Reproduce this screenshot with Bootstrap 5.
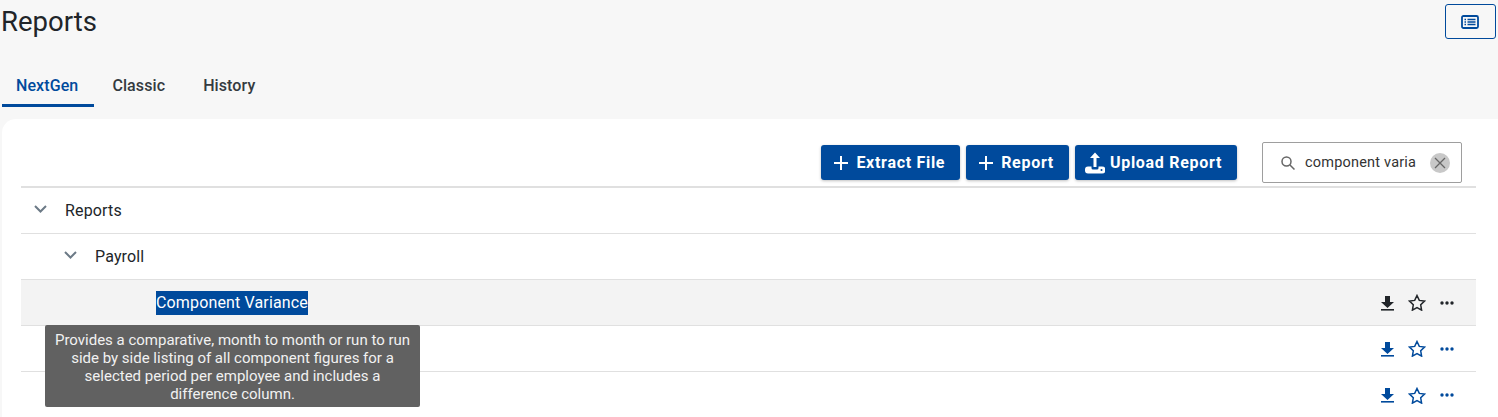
<!DOCTYPE html>
<html lang="en">
<head>
  <meta charset="UTF-8">
  <meta name="viewport" content="width=device-width, initial-scale=1">
  <title>Reports</title>
  <link href="https://cdn.jsdelivr.net/npm/bootstrap@5.3.3/dist/css/bootstrap.min.css" rel="stylesheet">
  <style>
    html, body { height: 417px; overflow: hidden; }
    body { background: #f7f7f7; font-family: Roboto, "Liberation Sans", sans-serif; color: #212529; font-size: 15px; }
    .page-title { font-size: 27.500px; line-height: 32px; font-weight: 400; margin: 0; padding: 6px 0 0 1px; height: 45px; }
    .view-btn { width: 51px; height: 35px; margin: 4px 2px 0 0; border: 1px solid #004a9c; border-radius: 3px; background: transparent; padding: 0 2px 0 0; color: #004a9c; }
    .tab-row { padding: 0 0 0 2px; height: 62px; align-items: flex-end; }
    .tab-item { font-size: 16px; font-weight: 500; letter-spacing: .1px; color: #343a40; height: 46px; line-height: 20px; padding: 15px 14px 0; border-bottom: 3px solid transparent; text-decoration: none; margin-right: 10px; }
    .tab-item.is-on { color: #004a9c; border-bottom-color: #004a9c; margin-right: 4px; padding-right: 16px; }
    .tab-spacer { height: 12px; }
    .sheet { background: #fff; border-radius: 14px 0 0 0; margin-left: 2px; padding: 23px 22px 0 19px; height: 300px; position: relative; }
    .tool-row { height: 46px; border-bottom: 2px solid #e0e0e0; align-items: flex-start; padding-top: 3px; }
    .tool-btns { gap: 6px; }
    .act-btn { height: 35px; background: #004a9c; color: #fff; border: 0; border-radius: 3px; font-size: 16px; font-weight: 700; letter-spacing: .7px; padding: 0 15px 0 13px; box-shadow: 0 1px 3px rgba(0,0,0,.25); white-space: nowrap; display: flex; align-items: center; gap: 8px; }
    .act-btn.has-upload { padding-left: 10px; gap: 5px; }
    .search-box { width: 200px; height: 41px; margin: -3px 14px 0 25px; border: 1px solid #9e9e9e; border-radius: 2px; padding: 0 10px 0 17px; font-size: 14.500px; letter-spacing: .2px; color: #333; }
    .search-txt { width: 113px; margin-left: 9px; white-space: nowrap; }
    .clear-dot { width: 20px; height: 20px; border-radius: 50%; background: #c8c8c8; margin-left: 12px; flex: none; }
    .tree-row { height: 46px; border-bottom: 1px solid #e0e0e0; font-size: 16px; letter-spacing: .15px; }
    .tree-row.is-hover { background: #f3f3f3; }
    .lvl-one { padding-left: 13px; }
    .lvl-two { padding-left: 43px; }
    .lvl-three { padding-left: 135px; }
    .caret-ico { margin: 0 18px 3px 0; }
    .sel-txt { background: #004a9c; color: #fff; }
    .row-icons { gap: 13px; padding-right: 22px; color: #004a9c; }
    .row-icons svg:last-child { margin-left: 1px; }
    .is-hover .row-icons { color: #212529; }
    .hint-box { position: absolute; left: 43px; top: 206px; width: 375px; height: 82px; background: #616161; color: #f1f1f1; border-radius: 2px; font-size: 15px; line-height: 18px; text-align: center; padding: 6px 8px; z-index: 5; letter-spacing: 0; }
  </style>
</head>
<body>

  <div class="d-flex justify-content-between">
    <h1 class="page-title">Reports</h1>
    <button class="view-btn" type="button" aria-label="Toggle view">
      <svg width="18" height="14" viewBox="0 0 18 14" fill="none" stroke="currentColor"><rect x="1" y="1" width="16" height="12" rx="1.500" stroke-width="1.800"/><path d="M3.500 4.500h1.500M6.500 4.500h8M3.500 7h1.500M6.500 7h8M3.500 9.500h1.500M6.500 9.500h8" stroke-width="1.400"/></svg>
    </button>
  </div>

  <div class="d-flex tab-row">
    <a class="tab-item is-on" href="#">NextGen</a>
    <a class="tab-item" href="#">Classic</a>
    <a class="tab-item" href="#">History</a>
  </div>
  <div class="tab-spacer"></div>

  <div class="sheet">
    <div class="d-flex justify-content-end tool-row">
      <div class="d-flex tool-btns">
        <button class="act-btn" type="button"><svg width="14" height="14" viewBox="0 0 14 14" stroke="currentColor" stroke-width="2"><path d="M7 0v14M0 7h14"/></svg> Extract File</button>
        <button class="act-btn" type="button"><svg width="14" height="14" viewBox="0 0 14 14" stroke="currentColor" stroke-width="2"><path d="M7 0v14M0 7h14"/></svg> Report</button>
        <button class="act-btn has-upload" type="button"><svg width="20" height="22" viewBox="0 0 20 22" fill="currentColor"><path d="M8.500 15V6H5l5-5.500L15 6h-3.500v9z"/><path d="M0 17.500a3 3 0 0 1 3-3h3.500v1.500a1.500 1.500 0 0 0 1.500 1.500h4a1.500 1.500 0 0 0 1.500-1.500v-1.500H17a3 3 0 0 1 0 7H3a3 3 0 0 1-3-3z"/><circle cx="16.500" cy="18" r="1" fill="#004a9c"/></svg> Upload Report</button>
      </div>
      <div class="d-flex align-items-center search-box">
        <svg width="16" height="16" viewBox="0 0 16 16" fill="none" stroke="#666" stroke-width="1.500"><circle cx="6.500" cy="6.500" r="4.500"/><path d="M10 10l4.500 4.500"/></svg>
        <div class="search-txt">component varia</div>
        <div class="clear-dot d-flex align-items-center justify-content-center">
          <svg width="12" height="12" viewBox="0 0 12 12" stroke="#666" stroke-width="1.300"><path d="M1 1l10 10M11 1L1 11"/></svg>
        </div>
      </div>
    </div>

    <div class="d-flex align-items-center tree-row lvl-one">
      <svg class="caret-ico" width="13" height="8" viewBox="0 0 13 8" fill="none" stroke="#6c7a86" stroke-width="2"><path d="M1 1l5.500 5.500L12 1"/></svg>
      <span>Reports</span>
    </div>
    <div class="d-flex align-items-center tree-row lvl-two">
      <svg class="caret-ico" width="13" height="8" viewBox="0 0 13 8" fill="none" stroke="#6c7a86" stroke-width="2"><path d="M1 1l5.500 5.500L12 1"/></svg>
      <span>Payroll</span>
    </div>
    <div class="d-flex align-items-center justify-content-between tree-row lvl-three is-hover">
      <span class="sel-txt">Component Variance</span>
      <div class="d-flex align-items-center row-icons">
        <svg width="15" height="16" viewBox="0 0 15 16" fill="currentColor"><path d="M5 1h5v6h4l-6.500 6L1 7h4z"/><rect x="1" y="14" width="13" height="1.600"/></svg>
        <svg width="18" height="17" viewBox="0 0 18 17" fill="none" stroke="currentColor" stroke-width="1.500"><path d="M9 1.500l2.300 4.900 5.200.700-3.800 3.700.9 5.300L9 13.500l-4.600 2.600.9-5.300-3.800-3.700 5.200-.700z"/></svg>
        <svg width="14" height="4" viewBox="0 0 14 4" fill="currentColor"><circle cx="2" cy="2" r="1.700"/><circle cx="7" cy="2" r="1.700"/><circle cx="12" cy="2" r="1.700"/></svg>
      </div>
    </div>
    <div class="d-flex align-items-center justify-content-end tree-row">
      <div class="d-flex align-items-center row-icons">
        <svg width="15" height="16" viewBox="0 0 15 16" fill="currentColor"><path d="M5 1h5v6h4l-6.500 6L1 7h4z"/><rect x="1" y="14" width="13" height="1.600"/></svg>
        <svg width="18" height="17" viewBox="0 0 18 17" fill="none" stroke="currentColor" stroke-width="1.500"><path d="M9 1.500l2.300 4.900 5.200.700-3.800 3.700.9 5.300L9 13.500l-4.600 2.600.9-5.300-3.800-3.700 5.200-.700z"/></svg>
        <svg width="14" height="4" viewBox="0 0 14 4" fill="currentColor"><circle cx="2" cy="2" r="1.700"/><circle cx="7" cy="2" r="1.700"/><circle cx="12" cy="2" r="1.700"/></svg>
      </div>
    </div>
    <div class="d-flex align-items-center justify-content-end tree-row border-0">
      <div class="d-flex align-items-center row-icons">
        <svg width="15" height="16" viewBox="0 0 15 16" fill="currentColor"><path d="M5 1h5v6h4l-6.500 6L1 7h4z"/><rect x="1" y="14" width="13" height="1.600"/></svg>
        <svg width="18" height="17" viewBox="0 0 18 17" fill="none" stroke="currentColor" stroke-width="1.500"><path d="M9 1.500l2.300 4.900 5.200.700-3.800 3.700.9 5.300L9 13.500l-4.600 2.600.9-5.300-3.800-3.700 5.200-.700z"/></svg>
        <svg width="14" height="4" viewBox="0 0 14 4" fill="currentColor"><circle cx="2" cy="2" r="1.700"/><circle cx="7" cy="2" r="1.700"/><circle cx="12" cy="2" r="1.700"/></svg>
      </div>
    </div>

    <div class="hint-box">Provides a comparative, month to month or run to run side by side listing of all component figures for a selected period per employee and includes a difference column.</div>
  </div>

  <script src="https://cdn.jsdelivr.net/npm/bootstrap@5.3.3/dist/js/bootstrap.bundle.min.js"></script>
</body>
</html>
